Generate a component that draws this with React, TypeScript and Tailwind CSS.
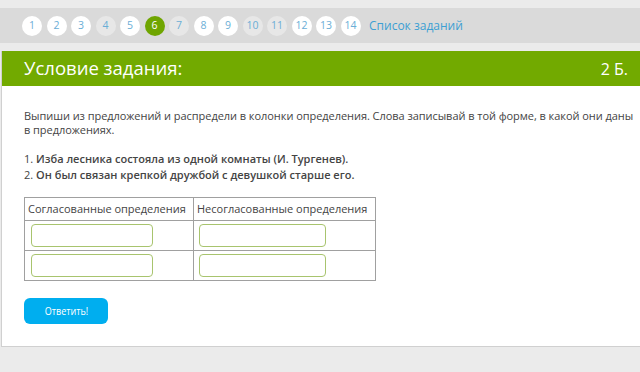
import React from "react";

const pages = [
	{ n: 1, state: "open" },
	{ n: 2, state: "open" },
	{ n: 3, state: "open" },
	{ n: 4, state: "done" },
	{ n: 5, state: "open" },
	{ n: 6, state: "current" },
	{ n: 7, state: "done" },
	{ n: 8, state: "open" },
	{ n: 9, state: "open" },
	{ n: 10, state: "done" },
	{ n: 11, state: "done" },
	{ n: 12, state: "open" },
	{ n: 13, state: "open" },
	{ n: 14, state: "open" },
];

const PageDot = ({ n, state }: { n: number; state: string }) => {
	const look =
		state === "current"
			? "bg-[#6fa500] text-white"
			: state === "done"
				? "bg-[#e7e7e7] text-[#6aaed6]"
				: "bg-white text-[#6aaed6]";
	return (
		<div className={`w-[20px] h-[20px] rounded-full flex items-center justify-center text-[10.5px] shrink-0 ${look}`}>
			{n}
		</div>
	);
};

const AnswerInput = ({ w }: { w: string }) => (
	<div className={`${w} h-[23px] rounded-[4px] border-[1.5px] border-[#a8c46e] bg-white`} />
);

export default function App() {
	return (
		<div className="w-[640px] h-[372px] bg-[#ebebeb] overflow-hidden font-['Open_Sans',sans-serif] pt-[8px]">
			{/* Task switcher */}
			<div className="h-[35px] bg-[#dadada] flex items-center pl-[22px] gap-[4.5px]">
				{pages.map((p) => (
					<PageDot key={p.n} n={p.n} state={p.state} />
				))}
				<span className="ml-[4px] text-[12px] text-[#3d9fd3]">Список заданий</span>
			</div>

			{/* Task card */}
			<div className="mt-[8px] ml-[1px] bg-white border-l border-b border-[#d0d0d0]">
				<div className="h-[35px] bg-[#72aa00] flex items-center justify-between pl-[22px] pr-[12px] text-white">
					<span className="text-[18.5px] leading-none">Условие задания:</span>
					<span className="text-[16px] leading-none">2 Б.</span>
				</div>

				<div className="pl-[22px] pt-[23px] pb-[22px] text-[11px] text-[#444]">
					<p className="leading-[14px] tracking-[-0.05px]">
						Выпиши из предложений и распредели в колонки определения. Слова записывай в той форме, в какой они даны в предложениях.
					</p>
					<p className="mt-[14px] leading-[16px]">
						1. <b className="font-semibold">Изба лесника состояла из одной комнаты (И. Тургенев).</b>
					</p>
					<p className="leading-[16px]">
						2. <b className="font-semibold">Он был связан крепкой дружбой с девушкой старше его.</b>
					</p>

					<table className="mt-[14px] border-collapse border border-[#a0a0a0] table-fixed">
						<thead>
							<tr className="h-[23px]">
								<th className="w-[169px] border border-[#a0a0a0] pl-[3px] pr-[2px] font-normal text-left whitespace-nowrap">Согласованные определения</th>
								<th className="w-[182px] border border-[#a0a0a0] pl-[3px] pr-[2px] font-normal text-left whitespace-nowrap">Несогласованные определения</th>
							</tr>
						</thead>
						<tbody>
							{[0, 1].map((r) => (
								<tr key={r} className="h-[30px]">
									<td className="border border-[#a0a0a0] px-[6px] align-middle">
										<AnswerInput w="w-[122px]" />
									</td>
									<td className="border border-[#a0a0a0] px-[5px] align-middle">
										<AnswerInput w="w-[127px]" />
									</td>
								</tr>
							))}
						</tbody>
					</table>

					<button className="mt-[17px] w-[84px] h-[26px] rounded-[6px] bg-[#00aeef] text-white text-[11px] flex items-center justify-center">
						<span className="inline-block scale-x-[0.82]">Ответить!</span>
					</button>
				</div>
			</div>
		</div>
	);
}
